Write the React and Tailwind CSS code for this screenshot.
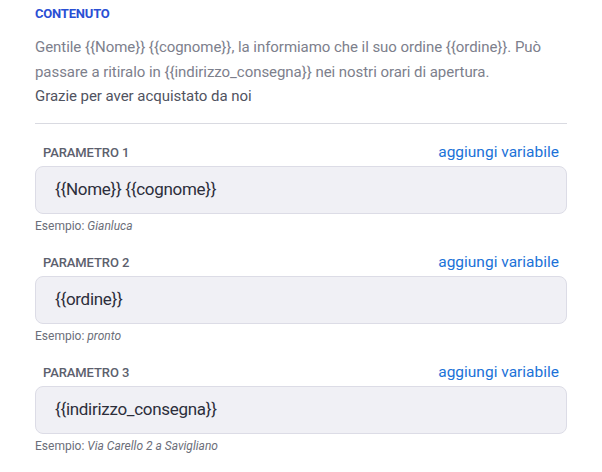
import React from 'react';

const params = [
  { label: 'PARAMETRO 1', value: '{{Nome}} {{cognome}}', example: 'Gianluca' },
  { label: 'PARAMETRO 2', value: '{{ordine}}', example: 'pronto' },
  { label: 'PARAMETRO 3', value: '{{indirizzo_consegna}}', example: 'Via Carello 2 a Savigliano' },
];

const message =
  'Gentile {{Nome}} {{cognome}}, la informiamo che il suo ordine {{ordine}}. Può passare a ritiralo in {{indirizzo_consegna}} nei nostri orari di apertura.';

const App = () => {
  return (
    <div className="w-[602px] h-[472px] bg-white px-[35px] pt-[4px] font-['Roboto',sans-serif] overflow-hidden">
      {/* Contenuto */}
      <div className="text-[13px] font-bold text-[#2a4fd4] leading-[20px] tracking-[-0.2px]">CONTENUTO</div>
      <div className="mt-[11px] text-[15px] leading-[24.5px] text-[#7d808c] tracking-[-0.05px]">
        <p>{message}</p>
        <p className="text-[#50535f]">Grazie per aver acquistato da noi</p>
      </div>
      <div className="mt-[14px] border-t border-[#d9dae1]" />

      {/* Parametri */}
      <div className="flex flex-col mt-[19px] gap-[19px]">
        {params.map((p) => (
          <div key={p.label}>
            <div className="flex items-center justify-between pl-2 pr-[8px] h-[20px]">
              <span className="text-[13px] font-medium text-[#5c606d] tracking-[-0.1px]">{p.label}</span>
              <button className="text-[15.5px] text-[#1b72d8]">aggiungi variabile</button>
            </div>
            <div className="mt-[3px] h-[48px] flex items-center px-[19px] bg-[#f0f0f5] border border-[#dcdce6] rounded-lg text-[17px] text-[#2c2e3b] tracking-[-0.3px]">
              {p.value}
            </div>
            <div className="mt-[4px] text-[12px] leading-[16px] text-[#6b6e79]">
              Esempio: <span className="italic">{p.example}</span>
            </div>
          </div>
        ))}
      </div>
    </div>
  );
};

export default App;
